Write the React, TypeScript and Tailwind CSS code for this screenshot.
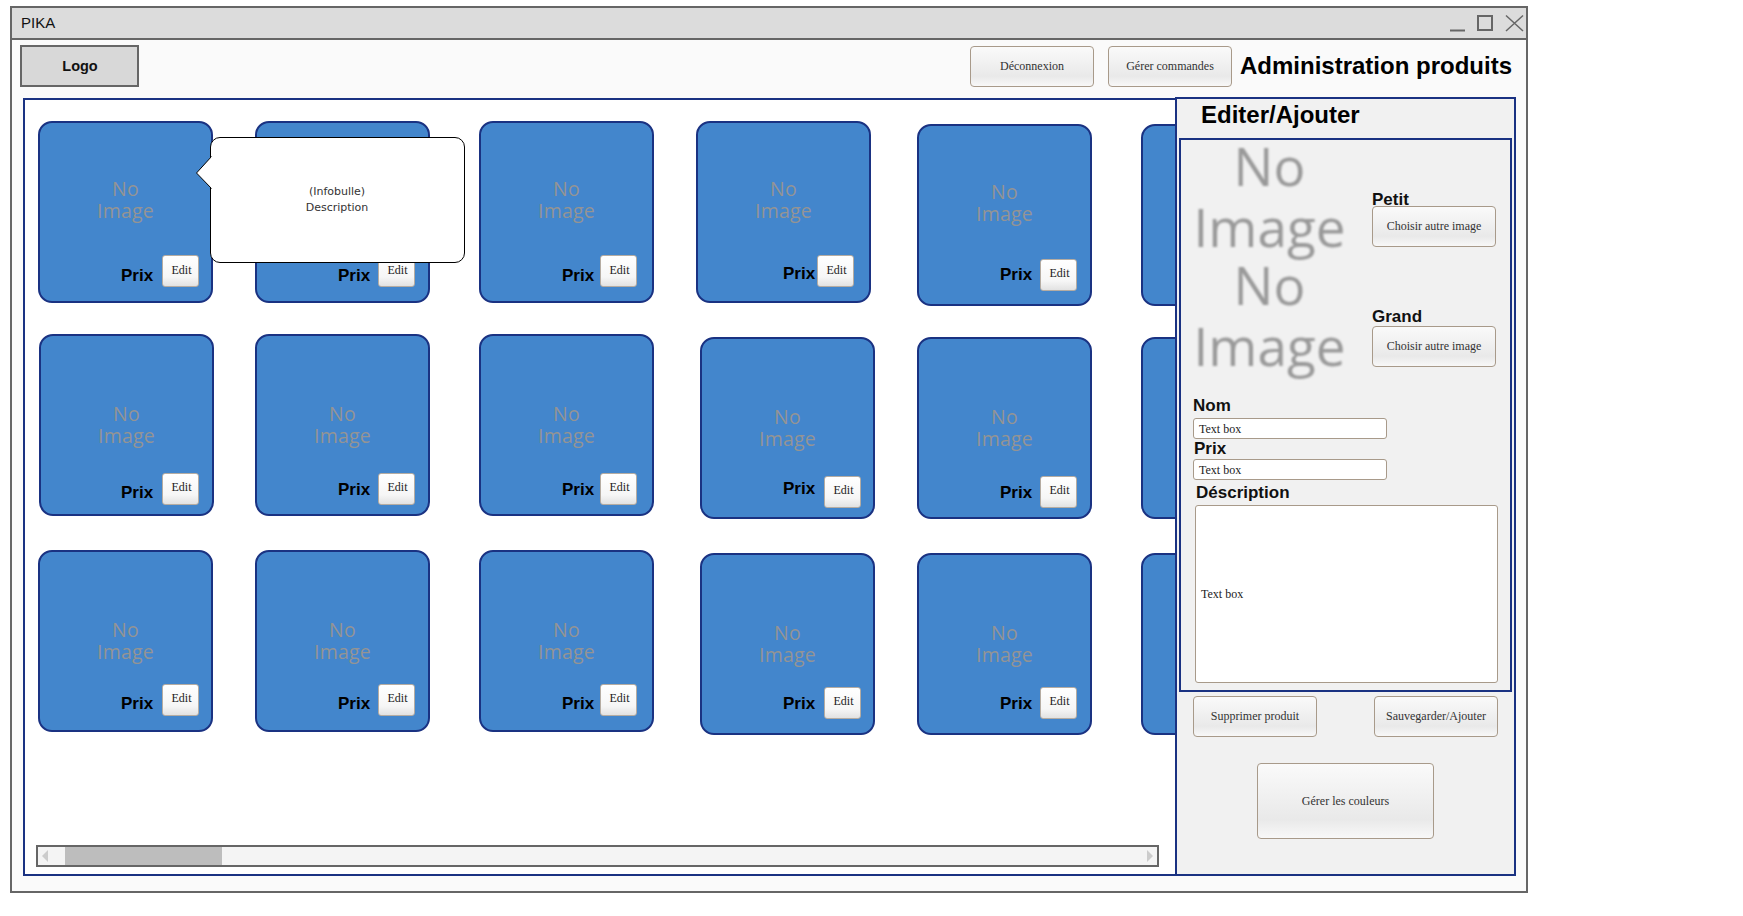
const serif = "font-['Liberation_Serif',serif]";
const sans = "font-['Liberation_Sans',sans-serif]";
const open = "font-['Open_Sans',sans-serif]";
const btn = `flex items-center justify-center rounded-[4px] border border-[#a89a8a] bg-[linear-gradient(180deg,#fafafa_0%,#e9e9e9_75%,#f8f8f8_100%)] text-[12px] text-[#333] ${serif}`;

type C = { c: string; p: string; e: string };

const rows: { r: string; t: string; cards: C[] }[] = [
  {
    r: "mt-[21px]",
    t: "h-[121px] pt-[55px]",
    cards: [
      { c: "ml-[13px]", p: "ml-[81px] mt-[22px]", e: "ml-[7px] mt-[11px] pb-[3px]" },
      { c: "ml-[42px]", p: "ml-[81px] mt-[22px]", e: "ml-[6px] mt-[11px] pb-[3px]" },
      { c: "ml-[49px]", p: "ml-[81px] mt-[22px]", e: "ml-[4px] mt-[11px] pb-[3px]" },
      { c: "ml-[42px]", p: "ml-[85px] mt-[20px]", e: "ml-[0px] mt-[11px] pb-[3px]" },
      { c: "ml-[46px] mt-[3px]", p: "ml-[81px] mt-[18px]", e: "ml-[6px] mt-[12px] pb-[4px]" },
      { c: "ml-[49px] mt-[3px]", p: "ml-[81px] mt-[18px]", e: "ml-[6px] mt-[12px] pb-[4px]" },
    ],
  },
  {
    r: "mt-[28px]",
    t: "h-[123px] pt-[67px]",
    cards: [
      { c: "ml-[14px]", p: "ml-[80px] mt-[24px]", e: "ml-[7px] mt-[14px] pb-[4px]" },
      { c: "ml-[41px]", p: "ml-[81px] mt-[21px]", e: "ml-[6px] mt-[14px] pb-[4px]" },
      { c: "ml-[49px]", p: "ml-[81px] mt-[21px]", e: "ml-[4px] mt-[14px] pb-[4px]" },
      { c: "ml-[46px] mt-[3px]", p: "ml-[81px] mt-[17px]", e: "ml-[7px] mt-[14px] pb-[4px]" },
      { c: "ml-[42px] mt-[3px]", p: "ml-[81px] mt-[21px]", e: "ml-[6px] mt-[14px] pb-[4px]" },
      { c: "ml-[49px] mt-[3px]", p: "ml-[81px] mt-[21px]", e: "ml-[6px] mt-[14px] pb-[4px]" },
    ],
  },
  {
    r: "mt-[31px]",
    t: "h-[122px] pt-[67px]",
    cards: [
      { c: "ml-[13px]", p: "ml-[81px] mt-[20px]", e: "ml-[7px] mt-[10px] pb-[4px]" },
      { c: "ml-[42px]", p: "ml-[81px] mt-[20px]", e: "ml-[6px] mt-[10px] pb-[4px]" },
      { c: "ml-[49px]", p: "ml-[81px] mt-[20px]", e: "ml-[4px] mt-[10px] pb-[4px]" },
      { c: "ml-[46px] mt-[3px]", p: "ml-[81px] mt-[17px]", e: "ml-[7px] mt-[10px] pb-[4px]" },
      { c: "ml-[42px] mt-[3px]", p: "ml-[81px] mt-[17px]", e: "ml-[6px] mt-[10px] pb-[4px]" },
      { c: "ml-[49px] mt-[3px]", p: "ml-[81px] mt-[17px]", e: "ml-[6px] mt-[10px] pb-[4px]" },
    ],
  },
];

function Card({ c, p, e, t }: C & { t: string }) {
  return (
    <div className={`flex h-[182px] w-[175px] shrink-0 flex-col overflow-hidden rounded-[14px] border-2 border-[#1a3282] bg-[#4386cc] ${c}`}>
      <div className={`text-center text-[19.5px] leading-[22px] tracking-[0.2px] text-[#949494] ${open} ${t}`}>
        <div>No</div>
        <div>Image</div>
      </div>
      <div className="flex items-start">
        <div className={`h-[20px] w-[34px] shrink-0 text-[17px] leading-[20px] font-bold text-black ${sans} ${p}`}>Prix</div>
        <div className={`flex h-[32px] w-[37px] shrink-0 items-center justify-center rounded-[3px] border border-[#b5aca2] bg-[linear-gradient(180deg,#ffffff_0%,#f6f6f6_70%,#e2e2e2_100%)] pl-[2px] text-[12px] text-[#222] ${serif} ${e}`}>Edit</div>
      </div>
    </div>
  );
}

function BigNoImage() {
  return (
    <div className={`-mt-[5px] mr-[14px] w-[177px] shrink-0 text-center text-[53px] leading-[61px] font-medium text-[#999] blur-[1px] ${open}`}>
      <div>No</div>
      <div>Image</div>
    </div>
  );
}

function Label({ className, children }: { className: string; children: React.ReactNode }) {
  return <div className={`text-[17px] leading-[18px] font-bold text-[#111] ${sans} ${className}`}>{children}</div>;
}

function TextInput({ className }: { className: string }) {
  return (
    <div className={`flex h-[21px] w-[194px] items-center rounded-[3px] border border-[#a89a8a] bg-white pl-[5px] text-[12px] text-[#222] ${serif} ${className}`}>
      Text box
    </div>
  );
}

export default function App() {
  return (
    <div className="min-h-[916px] bg-white pt-[6px] pl-[10px]">
      <div className="flex h-[887px] w-[1518px] flex-col border-2 border-[#666] bg-[#fafafa]">
        {/* title bar */}
        <div className={`flex h-[32px] shrink-0 items-center border-b-2 border-[#666] bg-[#dcdcdc] pl-[9px] text-[15px] text-[#111] ${sans}`}>
          <span>PIKA</span>
          <svg className="mt-[2px] ml-auto" width="76" height="20" viewBox="0 0 76 20" fill="none" stroke="#666" strokeWidth="2">
            <path d="M0 16.5H15" />
            <rect x="28" y="2" width="14" height="14" />
            <path d="M56 1.5L73 17M73 1.5L56 17" strokeWidth="1.5" />
          </svg>
        </div>

        {/* header */}
        <div className={`flex h-[57px] shrink-0 items-start pt-[5px] pl-[8px] ${sans}`}>
          <div className="flex h-[42px] w-[119px] items-center justify-center border-2 border-[#666] bg-[#d8d8d8] pt-[2px] pl-[1px] text-[14.5px] font-bold text-[#111]">Logo</div>
          <div className={`mt-[1px] ml-auto h-[41px] w-[124px] pb-[2px] ${btn}`}>Déconnexion</div>
          <div className={`mt-[1px] ml-[14px] h-[41px] w-[124px] pb-[2px] ${btn}`}>Gérer commandes</div>
          <div className="mt-[7px] mr-[14px] ml-[8px] text-[24px] leading-[28px] font-bold text-black">Administration produits</div>
        </div>

        {/* body */}
        <div className="flex min-h-0 flex-1 pr-[10px] pb-[15px] pl-[11px]">
          <div className="relative mt-[1px] flex min-w-0 flex-1 flex-col overflow-hidden border-2 border-r-0 border-[#1a3282] bg-white">
            {rows.map((row, i) => (
              <div key={i} className={`flex items-start ${row.r}`}>
                {row.cards.map((card, j) => (
                  <Card key={j} t={row.t} {...card} />
                ))}
              </div>
            ))}

            {/* scrollbar */}
            <div className="mt-auto mb-[7px] ml-[11px] flex h-[22px] w-[1123px] items-center border-2 border-[#666] bg-[#f4f4f4]">
              <svg className="ml-[4px] shrink-0" width="6" height="12" viewBox="0 0 6 12"><path d="M6 0V12L0 6Z" fill="#ccc" /></svg>
              <div className="ml-[17px] h-full w-[157px] shrink-0 bg-[#bdbdbd]" />
              <svg className="mr-[4px] ml-auto shrink-0" width="6" height="12" viewBox="0 0 6 12"><path d="M0 0V12L6 6Z" fill="#ccc" /></svg>
            </div>

            {/* tooltip */}
            <div className="absolute top-[37px] left-[185px] flex h-[126px] w-[255px] flex-col items-center justify-center rounded-[10px] border border-black bg-white pr-[1px] text-[11px] leading-[16px] text-[#333] font-['DejaVu_Sans',sans-serif]">
              <svg className="absolute top-[18px] left-[-16px]" width="18" height="34" viewBox="0 0 18 34">
                <path d="M17 0L1.5 17L17 33" fill="#fff" stroke="#000" strokeWidth="1" />
                <rect x="16" y="0.5" width="2" height="32" fill="#fff" />
              </svg>
              <div>(Infobulle)</div>
              <div>Description</div>
            </div>
          </div>

          {/* side panel */}
          <div className="flex w-[341px] shrink-0 flex-col border-2 border-[#1a3282] bg-[#f1f1f1]">
            <div className={`h-[39px] shrink-0 pt-[2px] pl-[24px] text-[24px] leading-[28px] font-bold text-black ${sans}`}>Editer/Ajouter</div>

            <div className="mx-[2px] flex h-[554px] shrink-0 flex-col border-2 border-[#1a3282]">
              <div className="flex h-[119px] shrink-0">
                <BigNoImage />
                <div className="pt-[51px]">
                  <Label className="">Petit</Label>
                  <div className={`-mt-[3px] h-[41px] w-[124px] pb-[2px] ${btn}`}>Choisir autre image</div>
                </div>
              </div>
              <div className="flex h-[119px] shrink-0">
                <BigNoImage />
                <div className="pt-[49px]">
                  <Label className="">Grand</Label>
                  <div className={`h-[41px] w-[124px] pb-[2px] ${btn}`}>Choisir autre image</div>
                </div>
              </div>

              <div className="pl-[12px]">
                <Label className="mt-[19px]">Nom</Label>
                <TextInput className="mt-[3px]" />
                <Label className="mt-[1px] ml-[1px]">Prix</Label>
                <TextInput className="mt-[1px]" />
                <Label className="mt-[4px] ml-[3px]">Déscription</Label>
                <div className={`mt-[3px] ml-[2px] flex h-[178px] w-[303px] items-center rounded-[3px] border border-[#a89a8a] bg-white pl-[5px] text-[12px] text-[#222] ${serif}`}>
                  Text box
                </div>
              </div>
            </div>

            <div className="mt-[4px] flex shrink-0 justify-between pr-[16px] pl-[16px]">
              <div className={`h-[41px] w-[124px] pb-[2px] ${btn}`}>Supprimer produit</div>
              <div className={`h-[41px] w-[124px] pb-[2px] ${btn}`}>Sauvegarder/Ajouter</div>
            </div>
            <div className={`mt-[26px] ml-[80px] h-[76px] w-[177px] shrink-0 ${btn}`}>Gérer les couleurs</div>
          </div>
        </div>
      </div>
    </div>
  );
}
